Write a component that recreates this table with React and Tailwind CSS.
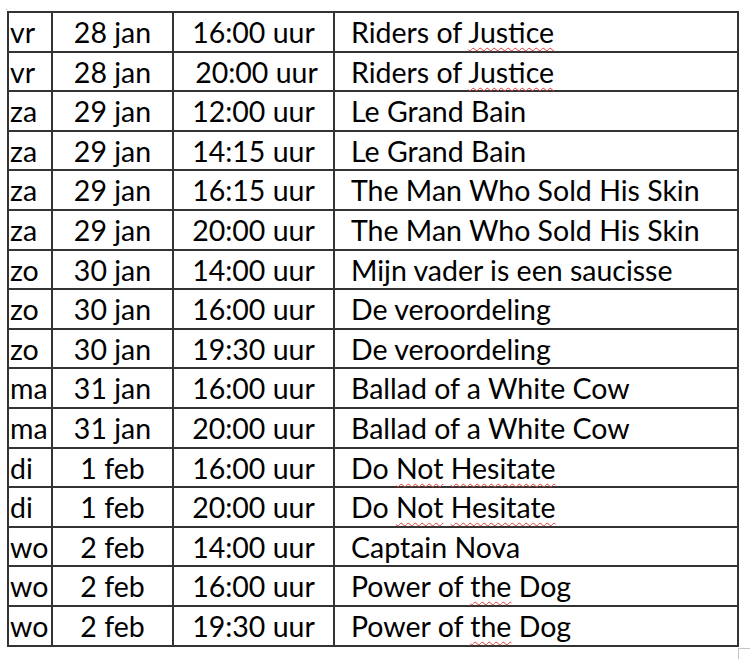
import React from "react";

const rows = [
  ["vr", "28 jan", "16:00 uur", "Riders of Justice"],
  ["vr", "28 jan", "20:00 uur", "Riders of Justice", true],
  ["za", "29 jan", "12:00 uur", "Le Grand Bain"],
  ["za", "29 jan", "14:15 uur", "Le Grand Bain"],
  ["za", "29 jan", "16:15 uur", "The Man Who Sold His Skin"],
  ["za", "29 jan", "20:00 uur", "The Man Who Sold His Skin"],
  ["zo", "30 jan", "14:00 uur", "Mijn vader is een saucisse"],
  ["zo", "30 jan", "16:00 uur", "De veroordeling"],
  ["zo", "30 jan", "19:30 uur", "De veroordeling"],
  ["ma", "31 jan", "16:00 uur", "Ballad of a White Cow"],
  ["ma", "31 jan", "20:00 uur", "Ballad of a White Cow"],
  ["di", "1 feb", "16:00 uur", "Do Not Hesitate"],
  ["di", "1 feb", "20:00 uur", "Do Not Hesitate"],
  ["wo", "2 feb", "14:00 uur", "Captain Nova"],
  ["wo", "2 feb", "16:00 uur", "Power of the Dog"],
  ["wo", "2 feb", "19:30 uur", "Power of the Dog"],
];

const squiggly = ["Justice", "Not", "Hesitate", "the"];

function Title({ text }) {
  const parts = text.split(" ");
  return (
    <>
      {parts.map((w, i) => (
        <React.Fragment key={i}>
          {i > 0 && " "}
          {squiggly.includes(w) ? (
            <span className="underline decoration-wavy decoration-[#e23b3b] decoration-[1px] underline-offset-[4px]">
              {w}
            </span>
          ) : (
            w
          )}
        </React.Fragment>
      ))}
    </>
  );
}

export default function App() {
  return (
    <div className="relative w-[750px] h-[659px] bg-white text-black overflow-hidden" style={{ fontFamily: "Lato, 'Noto Sans', sans-serif" }}>
      <div className="absolute left-[6px] top-[9px] w-[1px] h-[1px] bg-[#bbbbbb]" />
      <div className="pt-[11px] pl-[7px]">
        <div className="grid grid-cols-[44px_121px_161px_404px] border-t-2 border-l-2 border-[#333] w-max">
          {rows.map((r, i) => (
            <React.Fragment key={i}>
              <div className="h-[39.6px] border-r-2 border-b-2 border-[#333] pl-[1px] text-[28.5px] leading-[38px] whitespace-nowrap overflow-hidden">
                {r[0]}
              </div>
              <div className="h-[39.6px] border-r-2 border-b-2 border-[#333] text-center text-[28.5px] leading-[38px] whitespace-nowrap">
                {r[1]}
              </div>
              <div className={"h-[39.6px] border-r-2 border-b-2 border-[#333] text-center text-[28.5px] leading-[38px] whitespace-nowrap " + (r[4] ? "pl-[6px]" : "")}>
                {r[2]}
              </div>
              <div className="h-[39.6px] border-r-2 border-b-2 border-[#333] pl-[16px] text-[28.5px] leading-[38px] whitespace-nowrap">
                <Title text={r[3]} />
              </div>
            </React.Fragment>
          ))}
        </div>
      </div>
      <div className="absolute left-[738px] top-[648px] w-[12px] h-[11px] border-t border-l border-[#c4c4c4]" />
    </div>
  );
}
